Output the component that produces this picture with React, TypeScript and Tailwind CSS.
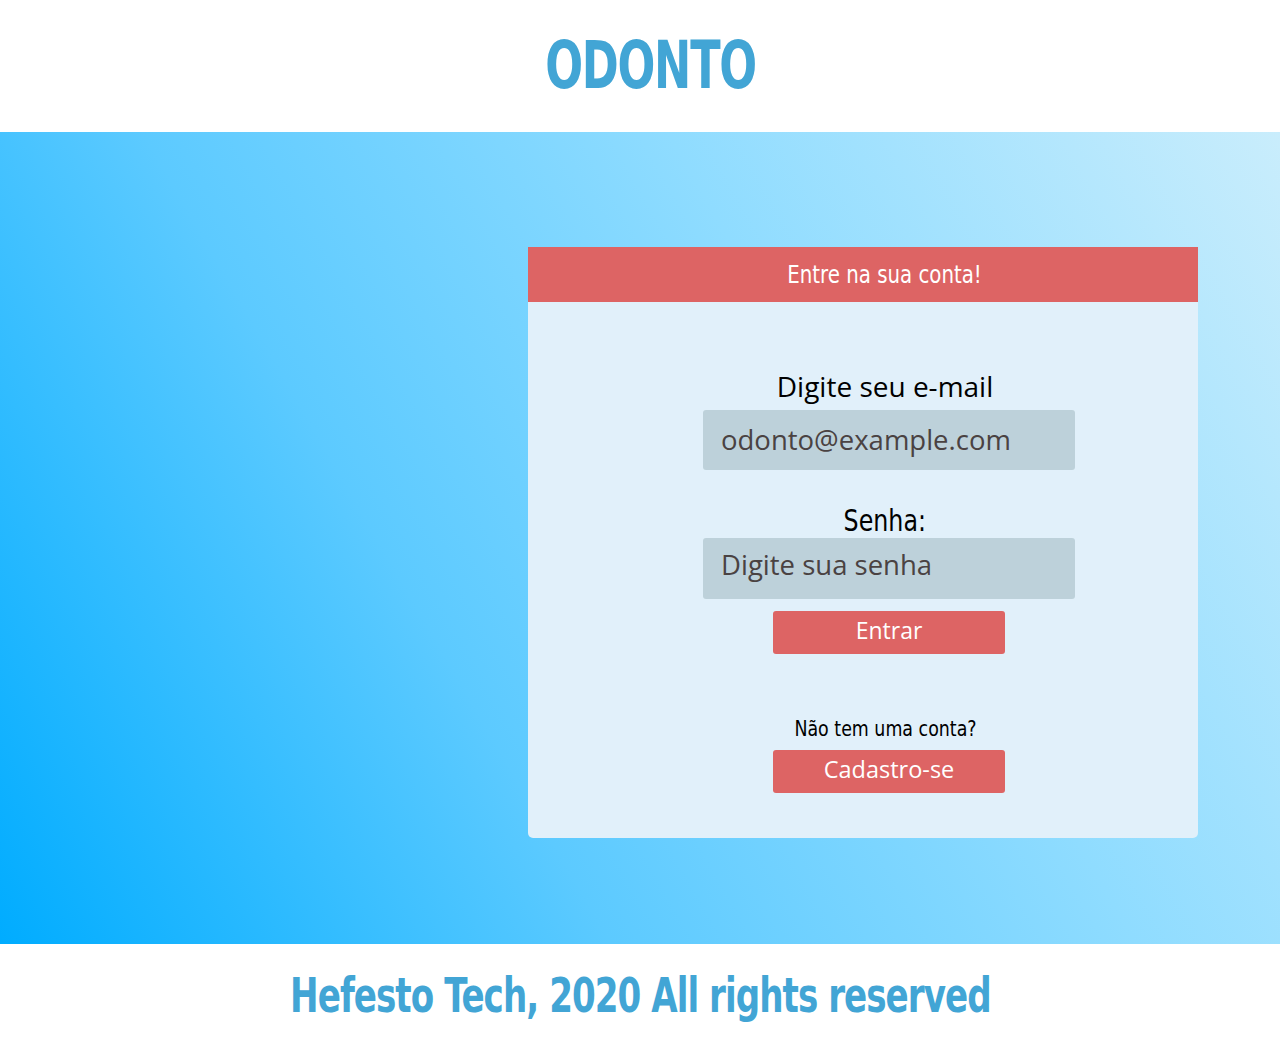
import React from "react";

export default function App() {
  return (
    <div className="w-[1280px] h-[1042px] flex flex-col bg-white font-['Open_Sans','Noto_Sans',sans-serif]">
      {/* Header */}
      <header className="h-[132px] flex items-center justify-center pl-[22px]">
        <h1 className="inline-block scale-x-[0.75] text-[66px] font-bold text-[#42a5d5] tracking-tight leading-none font-['DejaVu_Sans_Condensed',sans-serif]">
          ODONTO
        </h1>
      </header>

      {/* Main */}
      <main className="h-[812px] bg-[linear-gradient(60deg,#00acff_0%,#5ccaff_35%,#8fdcff_65%,#c9edfc_100%)] flex justify-end pt-[115px] pr-[82px]">
        <div className="w-[670px] h-[591px] flex flex-col bg-[#e1f0fa] rounded-b-[5px]">
          <div className="h-[55px] bg-[#dd6464] flex items-center justify-center pl-[44px]">
            <span className="inline-block scale-x-[0.88] text-white text-[25px] font-['DejaVu_Sans_Condensed',sans-serif]">Entre na sua conta!</span>
          </div>

          <div className="flex flex-col items-center pl-[52px] pt-[70px]">
            <label className="-ml-[8px] text-[28px] text-black leading-none">Digite seu e-mail</label>
            <div className="mt-[10px] w-[372px] h-[60px] bg-[#bdd1da] rounded-[3px] flex items-center px-[18px]">
              <span className="text-[27.5px] text-[#4a4242]">odonto@example.com</span>
            </div>

            <label className="-ml-[8px] mt-[36px] inline-block scale-x-[0.88] text-[30px] text-black leading-none font-['DejaVu_Sans_Condensed',sans-serif]">Senha:</label>
            <div className="mt-[2px] w-[372px] h-[61px] bg-[#bdd1da] rounded-[3px] flex items-start pt-[6px] px-[18px]">
              <span className="text-[27.5px] text-[#4a4242]">Digite sua senha</span>
            </div>

            <button className="mt-[12px] w-[232px] h-[43px] bg-[#dd6464] rounded-[3px] text-white text-[23px] flex items-start justify-center pt-[2px]">
              Entrar
            </button>

            <span className="-ml-[8px] mt-[64px] inline-block scale-x-[0.88] text-[22px] text-black leading-none font-['DejaVu_Sans_Condensed',sans-serif]">Não tem uma conta?</span>
            <button className="mt-[10px] w-[232px] h-[43px] bg-[#dd6464] rounded-[3px] text-white text-[23.5px] flex items-start justify-center pt-[2px]">
              Cadastro-se
            </button>
          </div>
        </div>
      </main>

      {/* Footer */}
      <footer className="h-[98px] flex items-center justify-center pt-[4px]">
        <p className="inline-block scale-x-[0.79] text-[48px] font-bold text-[#42a5d5] tracking-tight font-['DejaVu_Sans_Condensed',sans-serif]">
          Hefesto Tech, 2020 All rights reserved
        </p>
      </footer>
    </div>
  );
}
